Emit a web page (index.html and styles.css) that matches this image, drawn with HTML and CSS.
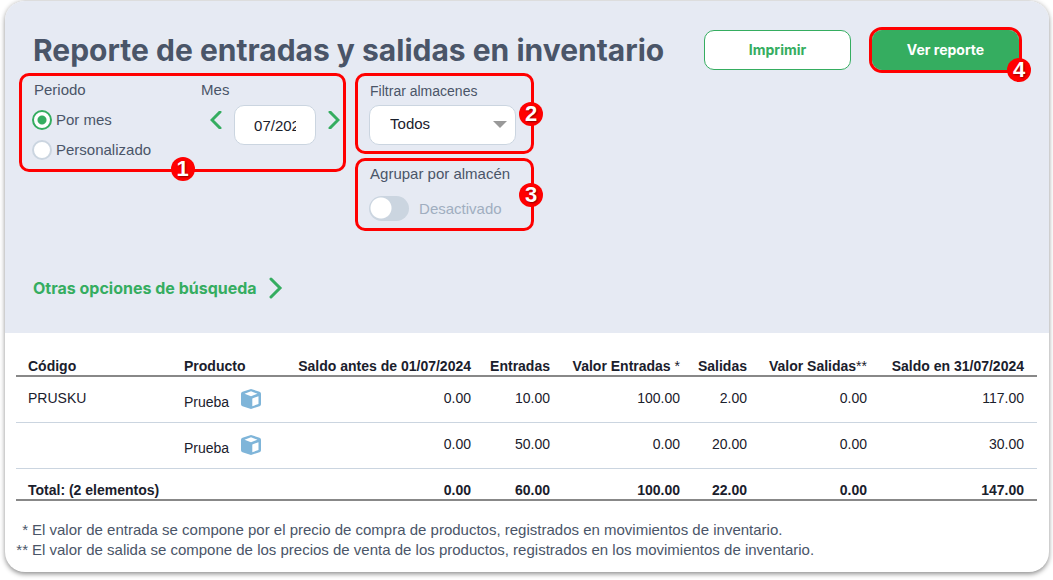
FILE: index.html
```html
<!DOCTYPE html>
<html lang="es">
<head>
    <meta charset="UTF-8">
    <meta name="viewport" content="width=device-width, initial-scale=1.0">
    <title>Reporte de entradas y salidas en inventario</title>
    <link rel="stylesheet" href="styles.css">
</head>
<body>
  <main class="card">
    <form class="search" action="#">
      <div class="top">
        <h1>Reporte de entradas y salidas en inventario</h1>
        <button type="button" class="btn">Imprimir</button>
        <div class="mark mark-btn">
          <button type="submit" class="btn btn-green">Ver reporte</button>
          <span class="num">4</span>
        </div>
      </div>

      <div class="filters">
        <div class="mark period">
          <fieldset class="radios">
            <legend>Periodo</legend>
            <label><input type="radio" name="periodo" checked>Por mes</label>
            <label><input type="radio" name="periodo">Personalizado</label>
          </fieldset>
          <div class="month">
            <label for="mes">Mes</label>
            <div class="month-row">
              <button type="button" class="arrow" aria-label="Mes anterior">
                <svg width="12" height="18" viewBox="0 0 12 18"><path d="M10 1L2 9l8 8"/></svg>
              </button>
              <input type="text" id="mes" value="07/2024">
              <button type="button" class="arrow" aria-label="Mes siguiente">
                <svg width="12" height="18" viewBox="0 0 12 18"><path d="M2 1l8 8-8 8"/></svg>
              </button>
            </div>
          </div>
          <span class="num">1</span>
        </div>

        <div class="stores">
          <div class="mark store">
            <label for="almacen">Filtrar almacenes</label>
            <div class="select">
              <select id="almacen">
                <option>Todos</option>
              </select>
            </div>
            <span class="num">2</span>
          </div>
          <div class="mark group">
            <label for="agrupar">Agrupar por almacén</label>
            <div class="switch">
              <input type="checkbox" id="agrupar">
              <span>Desactivado</span>
            </div>
            <span class="num">3</span>
          </div>
        </div>
      </div>

      <a class="more" href="#">Otras opciones de búsqueda
        <svg width="14" height="24" viewBox="0 0 14 24"><path d="M2 3l9 9-9 9"/></svg>
      </a>
    </form>

    <section class="report">
      <table>
        <colgroup>
          <col class="c-code"><col class="c-product"><col class="c-before"><col class="c-in">
          <col class="c-in-value"><col class="c-out"><col class="c-out-value"><col class="c-after">
        </colgroup>
        <thead>
          <tr>
            <th>Código</th>
            <th>Producto</th>
            <th>Saldo antes de 01/07/2024</th>
            <th>Entradas</th>
            <th>Valor Entradas <span>*</span></th>
            <th>Salidas</th>
            <th>Valor Salidas<span>**</span></th>
            <th>Saldo en 31/07/2024</th>
          </tr>
        </thead>
        <tbody>
          <tr>
            <td>PRUSKU</td>
            <td>Prueba
              <svg class="box" width="20" height="20" viewBox="0 0 20 20"><path fill-rule="evenodd" d="M10 0l8.500 2.700Q20 3.200 20 4.700v10.600q0 1.300-1.500 1.900L10 20l-8.500-2.800Q0 16.600 0 15.300V4.700Q0 3.200 1.500 2.700zM10 2.300L3.500 4.700 10 7.200l6.500-2.500zM11.300 9.400v7.800l6.200-2.200V7.200z"/></svg>
            </td>
            <td>0.00</td>
            <td>10.00</td>
            <td>100.00</td>
            <td>2.00</td>
            <td>0.00</td>
            <td>117.00</td>
          </tr>
          <tr>
            <td></td>
            <td>Prueba
              <svg class="box" width="20" height="20" viewBox="0 0 20 20"><path fill-rule="evenodd" d="M10 0l8.500 2.700Q20 3.200 20 4.700v10.600q0 1.300-1.500 1.900L10 20l-8.500-2.800Q0 16.600 0 15.300V4.700Q0 3.200 1.500 2.700zM10 2.300L3.500 4.700 10 7.200l6.500-2.500zM11.300 9.400v7.800l6.200-2.200V7.200z"/></svg>
            </td>
            <td>0.00</td>
            <td>50.00</td>
            <td>0.00</td>
            <td>20.00</td>
            <td>0.00</td>
            <td>30.00</td>
          </tr>
        </tbody>
        <tfoot>
          <tr>
            <th colspan="2">Total: (2 elementos)</th>
            <td>0.00</td>
            <td>60.00</td>
            <td>100.00</td>
            <td>22.00</td>
            <td>0.00</td>
            <td>147.00</td>
          </tr>
        </tfoot>
      </table>

      <div class="notes">
        <span>*</span><p>El valor de entrada se compone por el precio de compra de productos, registrados en movimientos de inventario.</p>
        <span>**</span><p>El valor de salida se compone de los precios de venta de los productos, registrados en los movimientos de inventario.</p>
      </div>
    </section>
  </main>
</body>
</html>
```

FILE: styles.css
```css
* {
  box-sizing: border-box;
}

body {
  margin: 0;
  background-color: #fff;
  color: #4a5568;
  font-family: "Liberation Sans", Arial, sans-serif;
  font-size: 15px;
  line-height: 20px;
}

button, input, select {
  font: inherit;
}

svg {
  fill: none;
  stroke: #35ad60;
  stroke-width: 3;
  stroke-linecap: round;
}

.card {
  margin: 0 4px 8px 5px;
  border-top: 1px solid #ddd;
  border-radius: 20px;
  overflow: hidden;
  box-shadow: 0 2px 5px rgba(0, 0, 0, 0.45);
}

/* search area */
.search {
  padding: 26px 27px 33px 14px;
  background-color: #e6eaf3;
}

.top {
  display: flex;
  align-items: center;
  gap: 18px;
  padding-left: 14px;
}

h1 {
  flex: 1;
  margin: 0;
  font-family: Inter, sans-serif;
  font-size: 30px;
  font-weight: 700;
  line-height: 40px;
  white-space: nowrap;
}

.btn {
  width: 147px;
  height: 40px;
  border: 1px solid #35ad60;
  border-radius: 10px;
  background-color: #fff;
  color: #35ad60;
  font-family: Inter, sans-serif;
  font-size: 14px;
  font-weight: 700;
}

.btn-green {
  display: block;
  background-color: #35ad60;
  color: #fff;
}

/* red frames with their number */
.mark {
  position: relative;
  border: 3px solid #f00;
  border-radius: 10px;
}

.mark-btn {
  border-radius: 13px;
}

.num {
  position: absolute;
  top: 50%;
  right: -12px;
  width: 24px;
  height: 24px;
  margin-top: -12px;
  border-radius: 50%;
  background-color: #f00;
  color: #fff;
  font-size: 22px;
  font-weight: 700;
  line-height: 24px;
  text-align: center;
  text-shadow: 1px 1px 2px #800;
}

.mark-btn .num {
  top: 100%;
}

.period .num {
  top: 100%;
  right: calc(50% - 12px);
}

.filters {
  display: flex;
  align-items: flex-start;
  gap: 9px;
}

.period {
  display: flex;
  gap: 50px;
  padding: 4px 3px 4px 12px;
}

.radios {
  margin: 0;
  padding: 0;
  border: 0;
}

.radios legend {
  padding: 0;
}

.radios label {
  display: flex;
  align-items: center;
  gap: 4px;
  height: 30px;
}

.radios legend + label {
  margin-top: 5px;
}

.radios input {
  appearance: none;
  width: 20px;
  height: 20px;
  margin: 0 0 0 -2px;
  border: 2px solid #cbd5e0;
  border-radius: 50%;
  background-color: #fff;
}

.radios input:checked {
  border-color: #35ad60;
  background-image: radial-gradient(circle, #35ad60 4px, #fff 5px);
}

.month > label {
  display: block;
}

.month-row {
  display: flex;
  align-items: center;
  gap: 12px;
  margin-top: 5px;
  padding-left: 9px;
}

.arrow {
  display: flex;
  align-items: center;
  height: 30px;
  margin-bottom: 10px;
  padding: 0;
  border: 0;
  background: none;
}

.month-row input,
.select select {
  height: 40px;
  border: 1px solid #cbd5e0;
  border-radius: 10px;
  background-color: #fff;
  color: #1a202c;
}

.month-row input {
  width: 82px;
  padding: 0 19px;
}

.stores {
  display: flex;
  flex-direction: column;
  gap: 4px;
}

.store,
.group {
  width: 179px;
  padding: 5px 11px 6px;
}

.store > label,
.group > label {
  display: block;
  padding-left: 1px;
}

.store > label {
  margin-bottom: 4px;
  font-size: 14px;
}

.select {
  position: relative;
  width: 147px;
}

.select select {
  appearance: none;
  width: 100%;
  padding: 0 30px 2px 20px;
}

.select::after {
  content: "";
  position: absolute;
  top: 16px;
  right: 9px;
  border: 7px solid transparent;
  border-top-color: #999;
  border-bottom: 0;
  pointer-events: none;
}

.group {
  padding-top: 3px;
  padding-bottom: 7px;
}

.switch {
  display: flex;
  align-items: center;
  gap: 10px;
  margin-top: 12px;
  color: #a0aec0;
}

.switch input {
  appearance: none;
  width: 40px;
  height: 25px;
  margin: 0;
  border-radius: 13px;
  background: radial-gradient(circle at 12px 12px, #fff 10px, #cbd5e0 11px);
}

.more {
  display: inline-flex;
  align-items: center;
  gap: 12px;
  margin-top: 45px;
  padding-left: 14px;
  color: #35ad60;
  font-family: Inter, sans-serif;
  font-size: 16px;
  font-weight: 700;
  text-decoration: none;
}

/* report */
.report {
  padding: 23px 12px 12px 11px;
}

table {
  width: 100%;
  table-layout: fixed;
  border-collapse: separate;
  border-spacing: 0;
  color: #1a202c;
  font-size: 14px;
}

.c-code { width: 162px; }
.c-product { width: 105px; }
.c-before { width: 194px; }
.c-in { width: 79px; }
.c-in-value { width: 130px; }
.c-out { width: 67px; }
.c-out-value { width: 120px; }
.c-after { width: 164px; }

th, td {
  padding: 11px 6px;
  text-align: right;
  vertical-align: top;
  white-space: nowrap;
}

th:first-child,
td:first-child {
  padding-left: 12px;
  text-align: left;
}

thead th:nth-child(2),
tbody td:nth-child(2) {
  text-align: left;
}

th:last-child,
td:last-child {
  padding-right: 13px;
}

thead th {
  padding-top: 1px;
  padding-bottom: 0;
  border-bottom: 2px solid #888;
  line-height: 18px;
}

thead span {
  font-weight: 400;
}

tbody td {
  height: 46px;
  padding-bottom: 0;
  border-bottom: 1px solid #cbd5e0;
}

tbody td:nth-child(2) {
  padding-top: 12px;
}

.box {
  margin-left: 8px;
  vertical-align: -2px;
  fill: #7fb5d9;
  stroke: none;
}

tfoot th,
tfoot td {
  padding-top: 12px;
  padding-bottom: 0;
  border-bottom: 2px solid #888;
  font-weight: 700;
  line-height: 18px;
}

tfoot th:first-child {
  padding-right: 0;
}

.notes {
  display: grid;
  grid-template-columns: 12px 1fr;
  column-gap: 4px;
  margin-top: 19px;
}

.notes span {
  text-align: right;
}

.notes p {
  margin: 0;
}
```
